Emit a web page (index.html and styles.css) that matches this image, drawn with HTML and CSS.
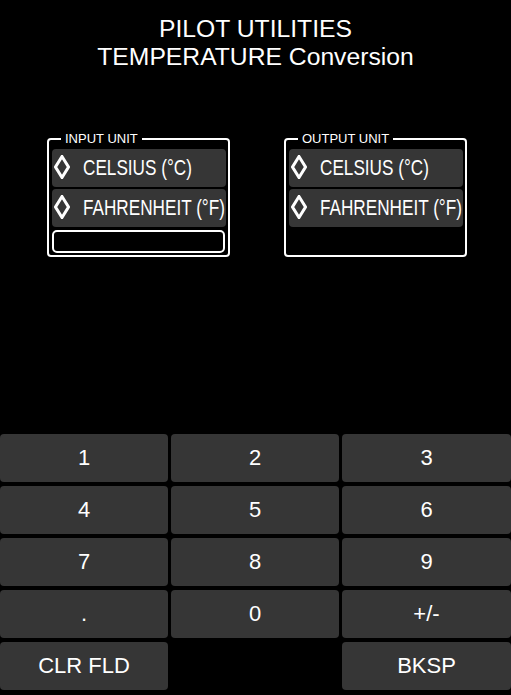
FILE: index.html
```html
<!DOCTYPE html>
<html lang="en">
<head>
    <meta charset="UTF-8">
    <meta name="viewport" content="width=device-width, initial-scale=1.0">
    <title>Pilot Utilities - Temperature Conversion</title>
    <link rel="stylesheet" href="styles.css">
</head>
<body>
    <div class="screen">
        <div class="title">
            <div>PILOT UTILITIES</div>
            <div>TEMPERATURE Conversion</div>
        </div>

        <div class="units">
            <fieldset class="unit-box">
                <legend>INPUT UNIT</legend>
                <div class="option">
                    <svg class="diamond" width="16" height="24" viewBox="0 0 16 24"><polygon points="8,1.5 14.5,12 8,22.5 1.5,12" /></svg>
                    <span class="option-label">CELSIUS (°C)</span>
                </div>
                <div class="option">
                    <svg class="diamond" width="16" height="24" viewBox="0 0 16 24"><polygon points="8,1.5 14.5,12 8,22.5 1.5,12" /></svg>
                    <span class="option-label">FAHRENHEIT (°F)</span>
                </div>
                <div class="value-field"></div>
            </fieldset>

            <fieldset class="unit-box">
                <legend>OUTPUT UNIT</legend>
                <div class="option">
                    <svg class="diamond" width="16" height="24" viewBox="0 0 16 24"><polygon points="8,1.5 14.5,12 8,22.5 1.5,12" /></svg>
                    <span class="option-label">CELSIUS (°C)</span>
                </div>
                <div class="option">
                    <svg class="diamond" width="16" height="24" viewBox="0 0 16 24"><polygon points="8,1.5 14.5,12 8,22.5 1.5,12" /></svg>
                    <span class="option-label">FAHRENHEIT (°F)</span>
                </div>
            </fieldset>
        </div>

        <div class="keypad">
            <button class="key">1</button>
            <button class="key">2</button>
            <button class="key">3</button>
            <button class="key">4</button>
            <button class="key">5</button>
            <button class="key">6</button>
            <button class="key">7</button>
            <button class="key">8</button>
            <button class="key">9</button>
            <button class="key">.</button>
            <button class="key">0</button>
            <button class="key">+/-</button>
            <button class="key">CLR FLD</button>
            <div class="key-blank"></div>
            <button class="key">BKSP</button>
        </div>
    </div>
</body>
</html>
```

FILE: styles.css
```css
* {
    box-sizing: border-box;
    margin: 0;
    padding: 0;
}
html, body {
    height: 100%;
    background: #000;
}
body {
    font-family: 'Liberation Sans', Arial, sans-serif;
    color: #fff;
}
.screen {
    height: 695px;
    display: flex;
    flex-direction: column;
}
.title {
    padding-top: 15px;
    text-align: center;
    font-size: 24.7px;
    line-height: 28px;
}
.units {
    display: flex;
    gap: 54px;
    margin-top: 60px;
    padding-left: 47px;
}
.unit-box {
    width: 183px;
    min-width: 0;
    flex: none;
    border: 2px solid #fff;
    border-radius: 4px;
    padding: 3px 2px 2px 3px;
    display: flex;
    flex-direction: column;
    gap: 2px;
}
.unit-box legend {
    margin-left: 9px;
    padding: 0 4px;
    font-size: 13px;
    line-height: 15px;
}
.option {
    height: 38px;
    min-width: 0;
    background: #363636;
    border-radius: 4px;
    display: flex;
    align-items: center;
    padding-left: 2px;
    overflow: hidden;
    white-space: nowrap;
}
/* the original uses a condensed face; squeeze Liberation Sans to match */
.option-label {
    font-size: 22px;
    transform: scaleX(0.78);
    transform-origin: left center;
}
.diamond {
    margin-right: 13px;
    margin-top: -3px;
    flex: none;
}
.diamond polygon {
    fill: none;
    stroke: #fff;
    stroke-width: 3;
    stroke-linejoin: miter;
}
.value-field {
    height: 23px;
    margin-top: 1px;
    margin-right: 1px;
    border: 2px solid #fff;
    border-radius: 5px;
    background: #000;
}
.keypad {
    margin-top: auto;
    padding-bottom: 5px;
    display: grid;
    grid-template-columns: 168px 168px 1fr;
    grid-auto-rows: 48px;
    gap: 4px 3px;
}
.key {
    background: #363636;
    color: #fff;
    border: none;
    border-radius: 4px;
    font-family: 'Liberation Sans', Arial, sans-serif;
    font-size: 22px;
    cursor: pointer;
}
```
